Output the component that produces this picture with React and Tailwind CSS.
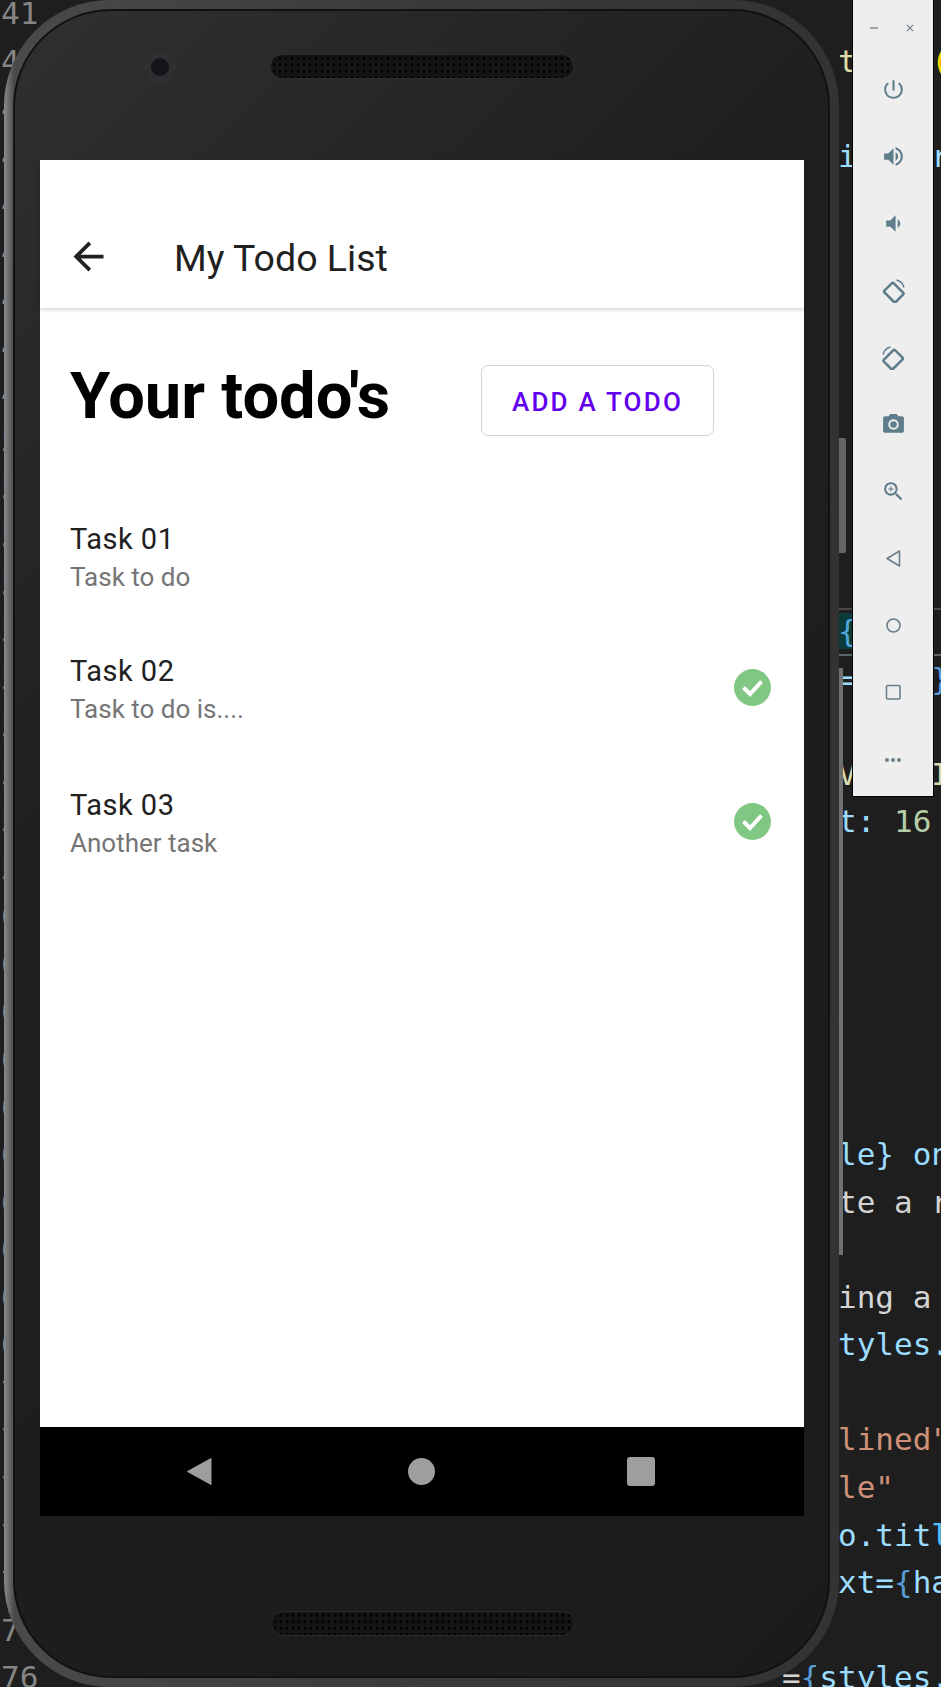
// App.jsx
import { MdArrowBack, MdPowerSettingsNew, MdVolumeUp, MdVolumeDown, MdPhotoCamera, MdZoomIn, MdMoreHoriz, MdClose } from 'react-icons/md';

// Editor lines behind the emulator: [line number, [[text, colour class], ...], highlighted]
const codeLines = {
    42: [['   t', 'text-[#dcdcaa]'], ['    ', ''], ['(', 'text-[#ffd700]']],
    44: [['   i    r', 'text-[#9cdcfe]']],
    54: [['   ', ''], ['{', 'text-[#4fa6d8] bg-[#0d3a3a]']],
    55: [['   =', 'text-[#9cdcfe]'], ['    ', ''], ['}', 'text-[#569cd6]']],
    57: [['   V', 'text-[#dcdcaa]'], ['    ', ''], ['I', 'text-[#dcdcaa]']],
    58: [['   t:', 'text-[#9cdcfe]'], [' ', ''], ['16', 'text-[#b5cea8]']],
    65: [['   le} on', 'text-[#9cdcfe]']],
    66: [['   te a r', 'text-[#d4d4d4]']],
    68: [['   ing a', 'text-[#d4d4d4]']],
    69: [['   tyles.', 'text-[#9cdcfe]']],
    71: [['   lined"', 'text-[#ce9178]']],
    72: [['   le"', 'text-[#ce9178]']],
    73: [['   o.tit', 'text-[#9cdcfe]'], ['l', 'text-[#4fc1ff]']],
    74: [['   xt=', 'text-[#9cdcfe]'], ['{', 'text-[#569cd6]'], ['ha', 'text-[#9cdcfe]']],
    76: [['=', 'text-[#d4d4d4]'], ['{', 'text-[#569cd6]'], ['styles.', 'text-[#9cdcfe]']],
};

const lineNumbers = Array.from({ length: 36 }, (_, i) => 41 + i);

function CodeBackground() {
    return (
        <div className="absolute inset-x-0 top-[-10px] font-['DejaVu_Sans_Mono',monospace] text-[31px] leading-[47.55px] whitespace-pre">
            {lineNumbers.map((n) => (
                <div key={n} className="flex h-[47.55px]">
                    <span className="w-[782px] shrink-0 pl-[1px] text-[#858585]">{n}</span>
                    <span className={`flex-1 box-border ${n === 54 ? 'border-t-2 border-b-2 border-t-[#4a4a4a] border-b-[#5b6469] leading-[43px]' : ''}`}>
                        {(codeLines[n] || []).map(([text, color], i) => (
                            <span key={i} className={color}>{text}</span>
                        ))}
                    </span>
                </div>
            ))}
        </div>
    );
}

function Speaker({ className }) {
    return (
        <div className={`w-[304px] h-[25px] rounded-full bg-[#141414] border border-[#2a2a2a] bg-[radial-gradient(circle,#000_1.2px,transparent_1.6px)] bg-[length:6px_6.5px] ${className}`} />
    );
}

function CheckIcon() {
    return (
        <svg width="37" height="37" viewBox="0 0 37 37" className="mb-[4px]">
            <circle cx="18.5" cy="18.5" r="18.5" fill="#81c784" />
            <path d="M9.5 18.5l6.5 6.5L27.5 12.5" fill="none" stroke="#fff" strokeWidth="4" />
        </svg>
    );
}

function TaskRow({ title, subtitle, done, height }) {
    return (
        <div className={`flex items-center justify-between pl-[30px] pr-[33px] ${height}`}>
            <div>
                <div className="text-[29px] leading-[40px] text-[#212121] tracking-[0.5px]">{title}</div>
                <div className="text-[26px] leading-[37px] text-[#757575]">{subtitle}</div>
            </div>
            {done && <CheckIcon />}
        </div>
    );
}

function RotateIcon({ flip }) {
    return (
        <svg width="25" height="25" viewBox="0 0 25 25" fill="none" stroke="#5f7d8b" className={flip ? '-scale-x-100' : ''}>
            <rect x="5.5" y="6.5" width="13" height="16" rx="1.5" strokeWidth="2.6" transform="rotate(-45 12.5 13.5)" />
            <path d="M15.5 2c3.5.8 6.5 3.6 7.5 7.5" strokeWidth="1.4" />
        </svg>
    );
}

const toolClass = 'h-[67px] flex items-center justify-center text-[#5f7d8b]';

function EmulatorToolbar() {
    return (
        <div className="absolute left-[852px] top-0 w-[82px] h-[797px] bg-[#eeeeee] border-x border-b border-black">
            <div className="h-[56px] flex items-center justify-between pl-[17px] pr-[17px]">
                <span className="w-[8px] h-[2px] bg-[#a0a4a6]" />
                <MdClose size={12} className="text-[#6b7b84]" />
            </div>
            <div className={toolClass}><MdPowerSettingsNew size={25} /></div>
            <div className={toolClass}><MdVolumeUp size={25} /></div>
            <div className={toolClass}><MdVolumeDown size={25} /></div>
            <div className={toolClass}><RotateIcon /></div>
            <div className={toolClass}><RotateIcon flip /></div>
            <div className={toolClass}><MdPhotoCamera size={25} /></div>
            <div className={toolClass}><MdZoomIn size={25} /></div>
            <div className={toolClass}>
                <svg width="25" height="25" viewBox="0 0 25 25" fill="none" stroke="#6a7f8a" strokeWidth="1.6">
                    <path d="M6 12.5L18.5 5v15z" strokeLinejoin="round" />
                </svg>
            </div>
            <div className={toolClass}>
                <svg width="25" height="25" viewBox="0 0 25 25" fill="none" stroke="#6a7f8a" strokeWidth="1.6">
                    <circle cx="12.5" cy="12.5" r="6.5" />
                </svg>
            </div>
            <div className={toolClass}>
                <svg width="25" height="25" viewBox="0 0 25 25" fill="none" stroke="#6a7f8a" strokeWidth="1.6">
                    <rect x="5.5" y="5.5" width="13.5" height="13.5" rx="1" />
                </svg>
            </div>
            <div className={toolClass}><MdMoreHoriz size={24} className="text-[#6a7f8a]" /></div>
        </div>
    );
}

function Phone() {
    return (
        <>
            {/* side buttons */}
            <div className="absolute left-[838px] top-[438px] w-[8px] h-[115px] rounded-r-[2px] bg-[#666666]" />
            <div className="absolute left-[838px] top-[668px] w-[5px] h-[587px] bg-[#707070]" />

            <div className="absolute left-[4px] top-0 w-[835px] h-[1687px] rounded-[106px] p-[9px] bg-[linear-gradient(90deg,#8a8a8a_0%,#4a4a4a_1.2%,#3a3a3a_50%,#333333_100%)]">
                <div className="h-full rounded-[98px] border-2 border-[#111111] pl-[25px] pr-[24px] bg-[linear-gradient(135deg,#303030_0%,#1f1f1f_35%,#1b1b1b_100%)]">
                    <div className="h-[149px] pt-[40px] flex items-start">
                        <div className="ml-[104px] w-[32px] h-[32px] rounded-full bg-[#2f2f31] flex items-center justify-center">
                            <div className="w-[18px] h-[18px] rounded-full bg-[#14141a]" />
                        </div>
                        <Speaker className="ml-[94px] mt-[3px]" />
                    </div>

                    <div className="h-[1356px] flex flex-col bg-white font-['Roboto',sans-serif]">
                        <div className="h-[148px] shrink-0 flex items-end pb-[29px] pl-[26px] shadow-[0_2px_4px_rgba(0,0,0,0.16)] text-[#212121]">
                            <MdArrowBack size={45} />
                            <span className="ml-[63px] -mb-[2px] text-[37.5px] leading-[45px]">My Todo List</span>
                        </div>

                        <div className="mt-[57px] flex items-center pl-[30px]">
                            <h1 className="w-[411px] h-[71px] box-border pb-[8px] text-[65px] leading-[63px] font-bold text-black whitespace-nowrap">Your todo's</h1>
                            <button className="w-[233px] h-[71px] box-border pt-[4px] rounded-[7px] border border-[#d4d4d4] text-[#6200ee] text-[26px] font-medium tracking-[2.2px]">ADD A TODO</button>
                        </div>

                        <div className="mt-[57px]">
                            <TaskRow title="Task 01" subtitle="Task to do" height="h-[129px]" />
                            <TaskRow title="Task 02" subtitle="Task to do is...." done height="h-[134px]" />
                            <TaskRow title="Task 03" subtitle="Another task" done height="h-[134px]" />
                        </div>

                        <div className="mt-auto h-[89px] bg-black flex items-center pl-[146px]">
                            <svg width="26" height="29" viewBox="0 0 26 29"><path d="M25 1.5v26L1.5 14.5z" fill="#9e9e9e" stroke="#9e9e9e" strokeLinejoin="round" /></svg>
                            <div className="ml-[196px] w-[27px] h-[27px] rounded-full bg-[#9e9e9e]" />
                            <div className="ml-[192px] w-[28px] h-[29px] rounded-[3px] bg-[#9e9e9e]" />
                        </div>
                    </div>

                    <Speaker className="ml-[231px] mt-[95px]" />
                </div>
            </div>
        </>
    );
}

export default function App() {
    return (
        <div className="relative w-[941px] h-[1687px] overflow-hidden bg-[#1e1e1e]">
            <CodeBackground />
            <Phone />
            <EmulatorToolbar />
        </div>
    );
}
